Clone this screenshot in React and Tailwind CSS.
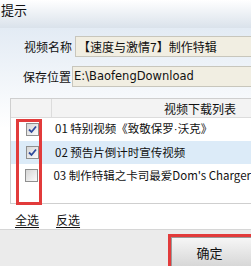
import React from 'react';

const cjk = { fontFamily: '"Noto Sans CJK SC", "Liberation Sans", sans-serif' };

const CheckBox = ({ checked }) => (
  <div className="w-[13px] h-[13px] border border-[#8f8f8f] bg-gradient-to-br from-[#d6d6d6] to-[#fbfbfb] flex items-center justify-center">
    {checked && (
      <svg width="9" height="9" viewBox="0 0 9 9">
        <path d="M1 4.5 L3.5 7 L8 1.5" fill="none" stroke="#2f4a9c" strokeWidth="1.8" />
      </svg>
    )}
  </div>
);

const rows = [
  {
    id: 1,
    label: (
      <>
        01 特别视频《致敬保罗<span style={{ fontFamily: '"Liberation Sans", sans-serif' }}>·</span>沃克》
      </>
    ),
    checked: true,
  },
  { id: 2, label: '02 预告片倒计时宣传视频', checked: true, active: true },
  { id: 3, label: "03 制作特辑之卡司最爱Dom's Charger", checked: false },
];

export default function App() {
  return (
    <div className="w-[251px] h-[266px] overflow-hidden flex flex-col bg-white text-[#111] text-[12px]" style={cjk}>
      <div className="h-[28px] shrink-0 bg-gradient-to-b from-white to-[#dae2eb] pl-[1px] pt-[1px] leading-[18px] text-[13px]">提示</div>
      <div className="flex-1 flex flex-col bg-gradient-to-b from-[#e3ebf4] via-white to-white">
        <div className="flex items-center mt-[8px] h-[21px]">
          <span className="w-[75px] text-right pr-[3px] text-[12px]">视频名称</span>
          <div className="flex-1 h-[21px] bg-[#f1eee2] border border-[#c8c6bc] border-r-0 flex items-center pl-[2px] text-[12px]">【速度与激情7】制作特辑</div>
        </div>
        <div className="flex items-center mt-[9px] h-[21px]">
          <span className="w-[72px] text-right pr-[1px] text-[12px]">保存位置</span>
          <div className="flex-1 h-[21px] bg-[#f1eee2] border border-[#c8c6bc] border-r-0 flex items-center pl-[1px]" style={{ fontFamily: '"DejaVu Sans", sans-serif', fontSize: '11.5px' }}>E:\BaofengDownload</div>
        </div>
        <div className="relative ml-[10px] mt-[11px] h-[106px] border border-[#cfcfcf] border-r-0 bg-white">
          <div className="flex h-[19px] bg-[#f3f3f3] border-b border-[#dcdcdc]">
            <div className="w-[41px] border-r border-[#dcdcdc]"></div>
            <div className="flex-1 text-right pr-[15px] leading-[19px] text-[12px]">视频下载列表</div>
          </div>
          {rows.map((r) => (
            <div key={r.id} className={`flex items-center h-[23px] ${r.active ? 'bg-[#dcebf8]' : 'bg-white'}`}>
              <div className="w-[42px] flex justify-center pl-[1px]">
                <CheckBox checked={r.checked} />
              </div>
              <span className="pl-[2px] whitespace-nowrap text-[11.5px]">{r.label}</span>
            </div>
          ))}
          <div className="absolute left-[5px] top-[20px] w-[26px] h-[86px] border-[3px] border-[#e23b3b]"></div>
        </div>
        <div className="flex gap-[17px] pl-[15px] mt-[6px] text-[12px] h-[19px] leading-[19px]">
          <span className="underline underline-offset-2">全选</span>
          <span className="underline underline-offset-2">反选</span>
        </div>
      </div>
      <div className="h-[37px] shrink-0 bg-[#ebebeb] border-t border-[#d6d6d6] flex justify-end items-start pt-[4px]">
        <div className="w-[83px] h-[34px] border-[3px] border-r-0 border-b-0 border-[#e23b3b]">
          <div className="h-full bg-gradient-to-b from-[#f6f6f6] to-[#d6d6d6] border border-[#9a9a9a] border-r-0 flex items-center justify-center pr-[4px] text-[13px]">确定</div>
        </div>
      </div>
    </div>
  );
}
